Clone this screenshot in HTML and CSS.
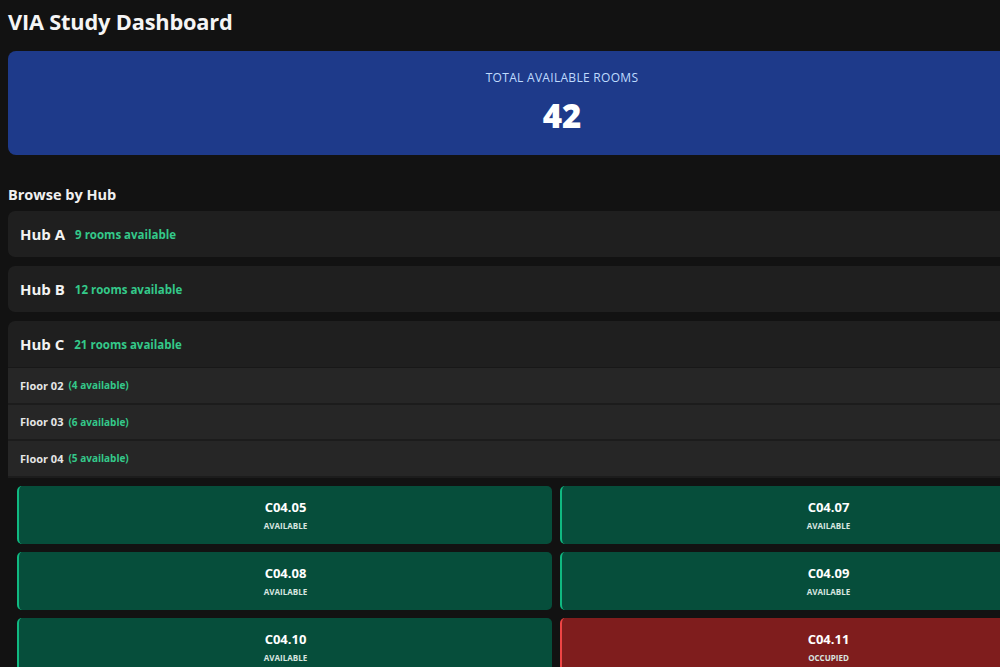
FILE: index.html
```html
<!DOCTYPE html>
<html lang="en">
<head>
<meta charset="utf-8">
<title>VIA Study Dashboard</title>
<link rel="stylesheet" href="styles.css">
</head>
<body>
<div class="page">
  <h1 class="title">VIA Study Dashboard</h1>
  <section class="total">
    <div class="total-label">TOTAL AVAILABLE ROOMS</div>
    <div class="total-value">42</div>
  </section>
  <h2 class="section-title">Browse by Hub</h2>
  <div class="hubs">
    <div class="hub">
      <div class="hub-head"><span class="hub-name">Hub A</span><span class="hub-count">9 rooms available</span></div>
    </div>
    <div class="hub">
      <div class="hub-head"><span class="hub-name">Hub B</span><span class="hub-count">12 rooms available</span></div>
    </div>
    <div class="hub open">
      <div class="hub-head"><span class="hub-name">Hub C</span><span class="hub-count">21 rooms available</span></div>
      <div class="floor"><span class="floor-name">Floor 02</span><span class="floor-count">(4 available)</span></div>
      <div class="floor"><span class="floor-name">Floor 03</span><span class="floor-count">(6 available)</span></div>
      <div class="floor"><span class="floor-name">Floor 04</span><span class="floor-count">(5 available)</span></div>
      <div class="rooms">
        <div class="room free"><div class="room-id">C04.05</div><div class="room-status">AVAILABLE</div></div>
        <div class="room free"><div class="room-id">C04.07</div><div class="room-status">AVAILABLE</div></div>
        <div class="room free"><div class="room-id">C04.08</div><div class="room-status">AVAILABLE</div></div>
        <div class="room free"><div class="room-id">C04.09</div><div class="room-status">AVAILABLE</div></div>
        <div class="room free"><div class="room-id">C04.10</div><div class="room-status">AVAILABLE</div></div>
        <div class="room busy"><div class="room-id">C04.11</div><div class="room-status">OCCUPIED</div></div>
      </div>
    </div>
  </div>
</div>
</body>
</html>
```
FILE: styles.css
```css
html, body {
  background: #121212;
}
body {
  margin: 0;
  padding: 0 8px;
  font-family: "Open Sans", "Noto Sans", "Liberation Sans", sans-serif;
  color: #f3f4f6;
  overflow: hidden;
}
.page {
  width: 1108px;
}
.title {
  margin: 0;
  padding-top: 6px;
  height: 44px;
  font-size: 21.8px;
  font-weight: 700;
  line-height: 32px;
  color: #f5f5f5;
  letter-spacing: -0.2px;
}
.total {
  margin-top: 1px;
  height: 104px;
  background: #1e3a8a;
  border-radius: 8px;
  display: flex;
  flex-direction: column;
  align-items: center;
  box-sizing: border-box;
  padding-top: 19px;
}
.total-label {
  font-size: 12px;
  font-weight: 500;
  color: #bfdbfe;
  letter-spacing: 0.3px;
  line-height: 16px;
}
.total-value {
  margin-top: 10px;
  font-size: 33px;
  font-weight: 800;
  color: #ffffff;
  line-height: 40px;
}
.section-title {
  margin: 29px 0 0;
  font-size: 14.5px;
  font-weight: 700;
  line-height: 22px;
  color: #f0f0f0;
}
.hubs {
  margin-top: 5px;
  display: flex;
  flex-direction: column;
  gap: 9px;
}
.hub {
  background: #1f1f1f;
  border-radius: 7px;
  overflow: hidden;
}
.hub-head {
  height: 46px;
  display: flex;
  align-items: center;
  padding: 0 12px;
  gap: 10px;
}
.hub-name {
  font-size: 15px;
  font-weight: 700;
  color: #f3f3f3;
}
.hub-count {
  font-size: 11.5px;
  font-weight: 700;
  color: #34c98a;
}
.open .hub-head {
  border-bottom: 1px solid #181818;
}
.floor {
  height: 34.5px;
  background: #262626;
  border-bottom: 2px solid #1c1c1c;
  display: flex;
  align-items: center;
  padding: 0 12px;
  gap: 5px;
}
.floor-name {
  font-size: 11px;
  font-weight: 700;
  color: #e5e5e5;
}
.floor-count {
  font-size: 10px;
  font-weight: 700;
  color: #34c98a;
}
.rooms {
  background: #121212;
  display: grid;
  grid-template-columns: 535px 535px;
  gap: 8px;
  padding: 8px 9px 9px 9px;
}
.room {
  height: 58px;
  border-radius: 5px;
  display: flex;
  flex-direction: column;
  align-items: center;
  justify-content: center;
  box-sizing: border-box;
}
.room.free {
  background: #064e3b;
  border-left: 2px solid #10b981;
}
.room.busy {
  background: #7f1d1d;
  border-left: 2px solid #ef4444;
}
.room-id {
  font-size: 13px;
  font-weight: 700;
  color: #ffffff;
  line-height: 18px;
}
.room-status {
  margin-top: 4px;
  font-size: 8px;
  font-weight: 700;
  color: #d9e6e0;
  line-height: 12px;
}
```
